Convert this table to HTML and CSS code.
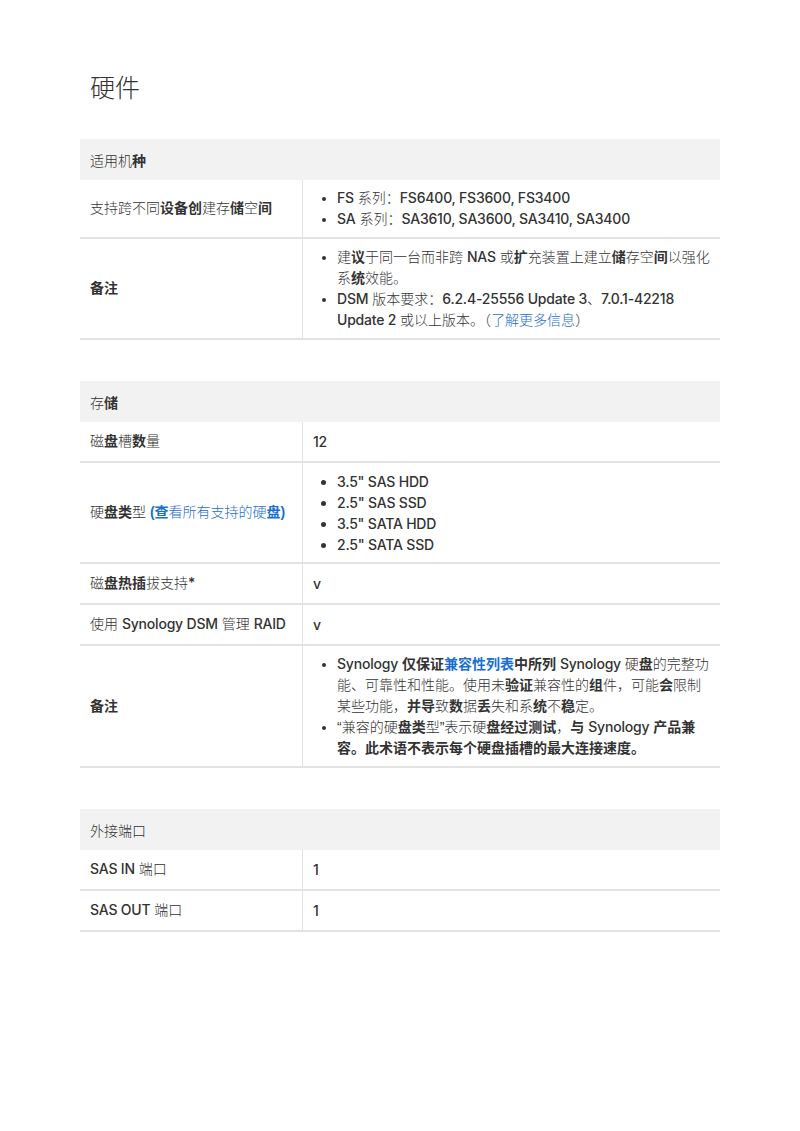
FILE: index.html
```html
<!DOCTYPE html>
<html>
<head>
  <meta charset="UTF-8">
  <title>硬件</title>
  <link rel="stylesheet" href="styles.css">
</head>
<body>
  <div class="page">
    <h1 class="title">硬件</h1>

    <table class="spec">
      <tr class="head"><th colspan="2">适用机<b>种</b></th></tr>
      <tr>
        <td class="key">支持跨不同<b>设备创</b>建存<b>储</b>空<b>间</b></td>
        <td class="val">
          <ul>
            <li><span class="en">FS</span> 系列：<span class="en">FS6400, FS3600, FS3400</span></li>
            <li><span class="en">SA</span> 系列：<span class="en">SA3610, SA3600, SA3410, SA3400</span></li>
          </ul>
        </td>
      </tr>
      <tr>
        <td class="key"><b>备注</b></td>
        <td class="val">
          <ul>
            <li>建<b>议</b>于同一台而非跨 <span class="en">NAS</span> 或<b>扩</b>充装置上建立<b>储</b>存空<b>间</b>以强化系<b>统</b>效能。</li>
            <li><span class="en">DSM</span> 版本要求：<span class="en">6.2.4-25556 Update 3</span>、<span class="en">7.0.1-42218 Update 2</span> 或以上版本。（<a href="#">了解更多信息</a>）</li>
          </ul>
        </td>
      </tr>
    </table>

    <table class="spec">
      <tr class="head"><th colspan="2">存<b>储</b></th></tr>
      <tr>
        <td class="key">磁<b>盘</b>槽<b>数</b>量</td>
        <td class="val"><span class="en">12</span></td>
      </tr>
      <tr>
        <td class="key">硬<b>盘类</b>型 <a href="#"><b>(查</b>看所有支持的硬<b>盘)</b></a></td>
        <td class="val">
          <ul>
            <li class="en">3.5" SAS HDD</li>
            <li class="en">2.5" SAS SSD</li>
            <li class="en">3.5" SATA HDD</li>
            <li class="en">2.5" SATA SSD</li>
          </ul>
        </td>
      </tr>
      <tr>
        <td class="key">磁<b>盘热插</b>拔支持<span class="en">*</span></td>
        <td class="val"><span class="en">v</span></td>
      </tr>
      <tr>
        <td class="key">使用 <span class="en">Synology DSM</span> 管理 <span class="en">RAID</span></td>
        <td class="val"><span class="en">v</span></td>
      </tr>
      <tr>
        <td class="key"><b>备注</b></td>
        <td class="val">
          <ul>
            <li><span class="en">Synology</span> <b>仅保证</b><a href="#"><b>兼容性列表</b></a><b>中所列</b> <span class="en">Synology</span> 硬<b>盘</b>的完整功能、可靠性和性能。使用未<b>验证</b>兼容性的<b>组</b>件，可能<b>会</b>限制某些功能，<b>并导</b>致<b>数</b>据<b>丢</b>失和系<b>统</b>不<b>稳</b>定。</li>
            <li>“兼容的硬<b>盘类</b>型”表示硬<b>盘经过测试</b>，<b>与</b> <span class="en">Synology</span> <b>产品兼容。此术语不表示每个硬盘插槽的最大连接速度。</b></li>
          </ul>
        </td>
      </tr>
    </table>

    <table class="spec">
      <tr class="head"><th colspan="2">外接端口</th></tr>
      <tr>
        <td class="key"><span class="en">SAS IN</span> 端口</td>
        <td class="val"><span class="en">1</span></td>
      </tr>
      <tr>
        <td class="key"><span class="en">SAS OUT</span> 端口</td>
        <td class="val"><span class="en">1</span></td>
      </tr>
    </table>
  </div>
</body>
</html>
```

FILE: styles.css
```css
* {padding: 0; margin: 0;}

body {
  background: #fff;
  color: #333;
  font-family: "Liberation Sans", "Noto Sans CJK SC", sans-serif;
  font-size: 14px;
  font-weight: 300;
}
.page {
  padding: 70px 80px;
}
.title {
  padding-left: 10px;
  font-size: 25px;
  line-height: 36px;
  font-weight: 300;
  color: #333;
  margin-bottom: 33px;
}
.spec {
  width: 640px;
  border-collapse: collapse;
  margin-bottom: 41px;
}
.spec b {
  font-weight: 700;
}
.spec .en {
  font-family: Inter, "Noto Sans CJK SC", sans-serif;
  font-weight: 500;
  letter-spacing: -0.2px;
}
.spec span.en {
  line-height: 14px;
}
.spec th {
  height: 41px;
  padding: 0 10px;
  background: #f2f2f2;
  font-weight: 300;
  text-align: left;
}
.spec td {
  padding: 9px 10px;
  line-height: 21px;
  border-bottom: 2px solid #e3e3e3;
  vertical-align: middle;
}
.spec td.key {
  width: 202px;
  border-right: 1px solid #e3e3e3;
}
.spec td.val {
  padding-top: 8px;
  padding-bottom: 7px;
}
.spec ul {
  padding-left: 24px;
}
.spec li {
  line-height: 21px;
}
.spec a {
  color: #1a6fd0;
  text-decoration: none;
}
```
